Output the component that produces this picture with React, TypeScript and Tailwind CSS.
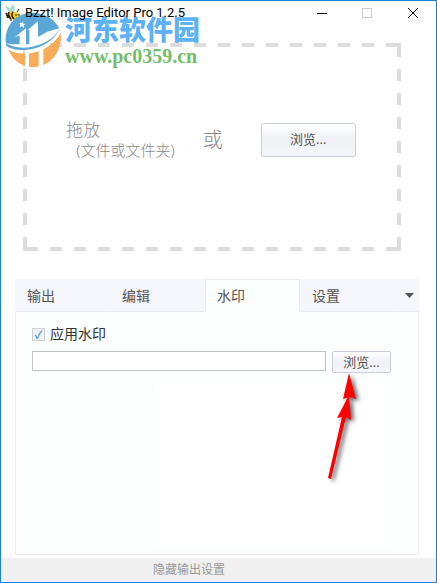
const tabs = ["输出", "编辑", "水印", "设置"];

function BeeIcon() {
  return (
    <svg className="h-4 w-4 shrink-0" viewBox="0 0 16 16" aria-hidden="true">
      <path d="M7 8C4 7 1 4 0 1c2 0 4 1 5 3 0-2 2-4 4-4 1 3 1 5-1 8z" fill="#a5dccd" />
      <path d="M1 8c2-1 6-2 9-1 3 0 5 2 5 4s-2 4-4 3c-3 1-7 1-9-2z" fill="#f6ca25" />
      <path d="M1 8l2 5M4 7c-1 2 0 5 2 7M8 7c-2 2-1 5 1 7" fill="none" stroke="#241d10" strokeWidth="1.600" />
      <path d="M11 9v2M14 9v2M6 14v2M10 14l1 2M12 7l2-3" stroke="#241d10" />
    </svg>
  );
}

function SiteLogo() {
  return (
    <svg className="h-14 w-14 shrink-0" viewBox="16 36 168 168" aria-hidden="true">
      <path
        d="M20 138C8 84 46 38 98 38c38 0 68 20 82 50-18 36-60 60-102 62-28 1-46-4-58-12z"
        fill="#5aa6d6"
      />
      <path
        d="M27 150c22 12 52 13 74 8 38-8 68-32 82-60 6 52-26 102-83 103-36 0-62-22-73-51z"
        fill="#f8ab58"
      />
      <path
        d="M45 112l34-27v48h10V90l-6 1 32-27v47l28-16 38-11c-14 30-52 52-92 58-28 4-54-2-70-12 12 3 26 4 41 2v-26z"
        fill="#fff"
      />
      <path d="M76 150h12v54H76zM117 144h14v58h-14z" fill="#fff" />
      <path d="M68 64l3 7 7 1-6 4 1 8-6-5-7 3 3-7-4-5 7-1z" fill="#fff" />
    </svg>
  );
}

function DashedFrame() {
  return (
    <svg
      className="pointer-events-none absolute inset-0 h-full w-full"
      stroke="#dcdcdc"
      strokeWidth="8"
      aria-hidden="true"
    >
      <g strokeDasharray="12 12">
        <line x1="3" y1="0" x2="100%" y2="0" />
        <line x1="3" y1="100%" x2="100%" y2="100%" />
        <line x1="0" y1="2" x2="0" y2="100%" />
        <line x1="100%" y1="2" x2="100%" y2="100%" />
      </g>
      <line x1="0" y1="0" x2="14" y2="0" />
      <line x1="0" y1="100%" x2="14" y2="100%" />
      <svg x="100%" overflow="visible">
        <line x1="-14" y1="0" x2="0" y2="0" />
        <line x1="-14" y1="100%" x2="0" y2="100%" />
      </svg>
    </svg>
  );
}

function PointerArrow() {
  return (
    <svg
      className="pointer-events-none absolute top-5 left-[-8px] h-28 w-10 drop-shadow-[3px_2px_2px_rgba(0,0,0,0.6)]"
      viewBox="0 0 40 112"
      aria-hidden="true"
    >
      <path d="M25 2l7 26-6-2-7 2z" fill="#f00" />
      <path d="M25 24l2 25-5-3L7 108l-3-1 14-61-5 1z" fill="#f00" />
    </svg>
  );
}

export default function App() {
  return (
    <main className="flex min-h-screen flex-col border border-[#1b80d6] bg-white font-['Noto_Sans','Noto_Sans_CJK_SC',sans-serif] text-[#555]">
      <header className="relative z-10 flex h-6 items-center pl-1">
        <BeeIcon />
        <h1 className="z-10 ml-1 font-['Roboto',sans-serif] text-[13px] leading-4 text-black">
          Bzzt! Image Editor Pro 1.2.5
        </h1>
        <div className="ml-auto flex">
          <button className="flex h-6 w-11 items-center justify-center" aria-label="Minimize">
            <svg className="h-3 w-3" viewBox="0 0 12 12" shapeRendering="crispEdges">
              <path d="M1 6.500h10" stroke="#000" />
            </svg>
          </button>
          <button className="flex h-6 w-[46px] items-center justify-center" aria-label="Maximize" disabled>
            <svg className="h-3 w-3" viewBox="0 0 12 12" shapeRendering="crispEdges">
              <path d="M1.500 1.500h9v9h-9z" fill="none" stroke="#ccc" />
            </svg>
          </button>
          <button className="flex h-6 w-[46px] items-center justify-center" aria-label="Close">
            <svg className="h-3 w-3" viewBox="0 0 12 12">
              <path d="M1 1l10 10M11 1L1 11" stroke="#000" />
            </svg>
          </button>
        </div>
        <div className="absolute top-[11px] left-1 flex gap-1">
          <SiteLogo />
          <div className="flex flex-col pt-1">
            <strong className="text-[27px] leading-7 font-black text-[#5db1f5]">河东软件园</strong>
            <span className="font-['Liberation_Serif',serif] text-xl leading-6 font-bold text-[#74bd69]">
              www.pc0359.cn
            </span>
          </div>
        </div>
      </header>

      <section className="relative mt-[18px] mr-[35px] ml-[22px] flex h-52 items-center justify-center pr-[2px] pb-[14px]">
        <DashedFrame />
        <p className="text-[17px] leading-5 font-light text-[#888]">
          拖放
          <span className="block pl-[10px] text-[15px]">(文件或文件夹)</span>
        </p>
        <span className="ml-7 text-xl font-light text-[#888]">或</span>
        <button className="ml-[38px] h-[34px] w-[95px] rounded-[3px] border border-[#c8ced6] bg-linear-to-b from-white via-[#f0f1f6] to-[#f5f6f9] text-[13px]">
          浏览...
        </button>
      </section>

      <section className="mt-7 mr-[17px] mb-[3px] ml-[14px] flex flex-1 flex-col">
        <div className="flex h-[33px] items-stretch bg-[#f5f6fb]" role="tablist">
          {tabs.map((tab) => (
            <button
              key={tab}
              role="tab"
              aria-selected={tab === "水印"}
              className="w-[95px] border border-transparent border-b-[#ebebeb] pl-[11px] text-left text-sm aria-selected:rounded-t-[3px] aria-selected:border-[#ebebeb] aria-selected:border-b-[#fcfefd] aria-selected:bg-[#fcfefd]"
            >
              {tab}
            </button>
          ))}
          <button
            className="flex flex-1 items-center justify-end border-b border-[#ebebeb] pr-[5px]"
            aria-label="More tabs"
          >
            <svg className="h-[5px] w-[9px]" viewBox="0 0 9 5">
              <path d="M0 0h9L4.500 5z" fill="#555" />
            </svg>
          </button>
        </div>
        <div
          className="flex flex-1 flex-col border border-t-0 border-[#ebebeb] bg-[#fcfefd] pt-3 pr-[27px] pb-[7px] pl-4"
          role="tabpanel"
        >
          <label className="flex items-center gap-[5px] text-sm text-[#333]">
            <input
              type="checkbox"
              defaultChecked
              className="grid h-[13px] w-[13px] appearance-none place-items-center border border-[#ccd0d4] bg-[#eef3f9] text-[11px] leading-none font-bold text-[#6795c9] checked:before:content-['✓']"
            />
            应用水印
          </label>
          <div className="mt-[7px] flex items-start gap-[6px]">
            <input
              type="text"
              aria-label="水印文件"
              className="h-5 min-w-0 flex-1 border border-[#c4c4c4] bg-white px-1 text-sm"
            />
            <div className="relative">
              <button className="block h-[22px] w-[59px] rounded-[2px] border border-[#c8ced6] bg-linear-to-b from-white via-[#f0f1f6] to-[#f5f6f9] text-[13px] leading-5">
                浏览...
              </button>
              <PointerArrow />
            </div>
          </div>
          <div className="mt-3 ml-[122px] flex-1 bg-white" />
        </div>
      </section>

      <footer className="flex h-6 items-center bg-[#f0f0f0] pl-[152px]">
        <button className="text-xs text-[#999]">隐藏输出设置</button>
      </footer>
    </main>
  );
}
